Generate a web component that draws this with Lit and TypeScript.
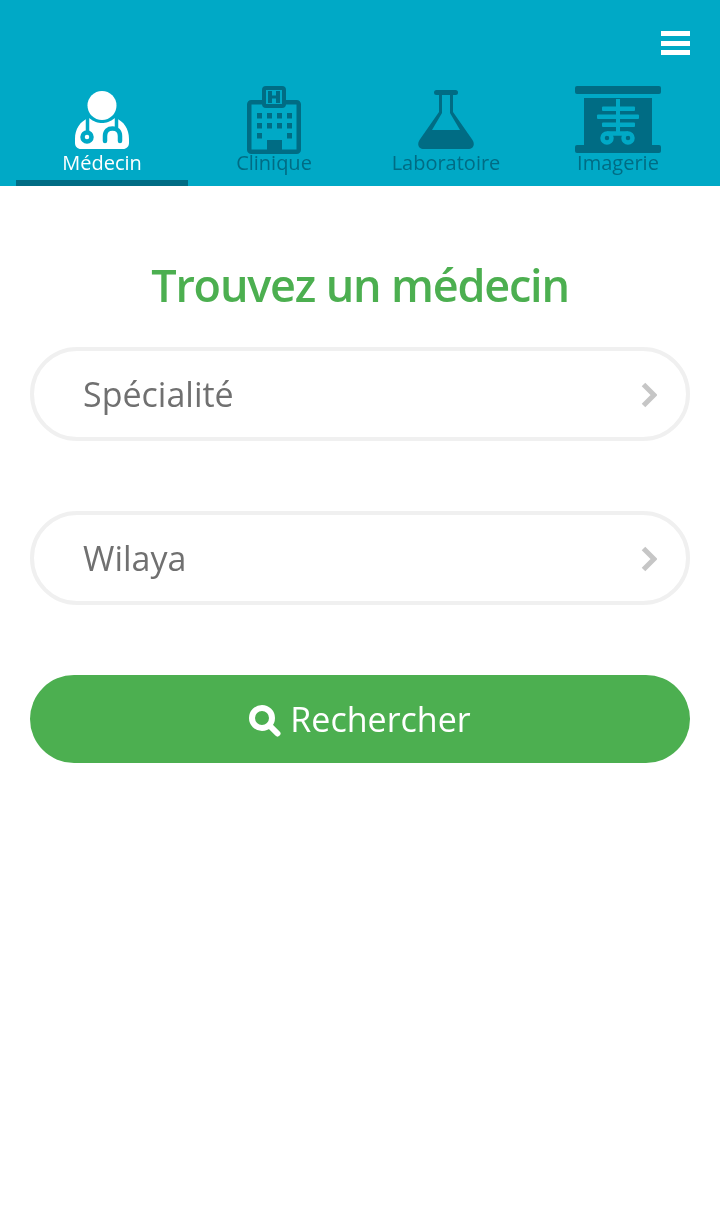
import { LitElement, css, html, svg } from 'lit';
import { customElement, state } from 'lit/decorators.js';

const doctorIcon = svg`
  <svg class="icon doctor" viewBox="0 0 54 58">
    <circle cx="27" cy="14.500" r="14.500" fill="currentColor"></circle>
    <path fill="currentColor" d="M14 27 C5 30 0 38 0 48 V52 C0 55.500 2.500 58 6 58 H48 C51.500 58 54 55.500 54 52 V48 C54 38 49 30 40 27 C35 31 31 32 27 32 C23 32 19 31 14 27 Z"></path>
    <g fill="none" stroke="#00a9c6" stroke-linecap="round">
      <path d="M12.500 26 V41" stroke-width="3.500"></path>
      <circle cx="12" cy="46" r="4.500" stroke-width="4.500"></circle>
      <path d="M41.500 26 V37" stroke-width="3.500"></path>
      <path d="M30 50 V45 C30 40 33 37.500 37.500 37.500 C42 37.500 45 40 45 45 V50" stroke-width="4.500"></path>
    </g>
  </svg>
`;

const clinicIcon = svg`
  <svg class="icon clinic" viewBox="0 0 54 68">
    <rect x="2.250" y="16.250" width="49.500" height="49.500" rx="2" fill="none" stroke="currentColor" stroke-width="4.500"></rect>
    <rect x="17" y="2" width="20" height="18" rx="2" fill="#00a9c6" stroke="currentColor" stroke-width="4"></rect>
    <path fill="currentColor" d="M21 5 H25 V9.500 H29 V5 H33 V17 H29 V12.500 H25 V17 H21 Z"></path>
    <g fill="currentColor">
      <rect x="10" y="27" width="5" height="5.500"></rect><rect x="20" y="27" width="5" height="5.500"></rect>
      <rect x="30" y="27" width="5" height="5.500"></rect><rect x="40" y="27" width="5" height="5.500"></rect>
      <rect x="10" y="37" width="5" height="5.500"></rect><rect x="20" y="37" width="5" height="5.500"></rect>
      <rect x="30" y="37" width="5" height="5.500"></rect><rect x="40" y="37" width="5" height="5.500"></rect>
      <rect x="10" y="47" width="5" height="5.500"></rect><rect x="40" y="47" width="5" height="5.500"></rect>
      <rect x="20" y="54" width="15" height="13"></rect>
    </g>
  </svg>
`;

const flaskIcon = svg`
  <svg class="icon flask" viewBox="0 0 56 59">
    <rect x="16" y="0" width="24" height="5" rx="2.500" fill="currentColor"></rect>
    <path fill="currentColor" fill-rule="evenodd" d="M21 4 V22 L1.500 50 C-1.500 54.500 1 59 6 59 H50 C55 59 57.500 54.500 54.500 50 L35 22 V4 Z M24 5 H32 V23 L42 40 H14 L24 23 Z"></path>
  </svg>
`;

const xrayIcon = svg`
  <svg class="icon xray" viewBox="0 0 86 67">
    <rect x="0" y="0" width="86" height="8" rx="2" fill="currentColor"></rect>
    <rect x="9" y="12" width="68" height="48" fill="currentColor"></rect>
    <rect x="0" y="59" width="86" height="8" rx="2" fill="currentColor"></rect>
    <g fill="#00a9c6">
      <rect x="41" y="13" width="4" height="35"></rect>
      <rect x="27" y="20.500" width="33" height="4.500" rx="1"></rect>
      <rect x="22" y="28.500" width="42" height="4.500" rx="1"></rect>
      <rect x="27" y="36.500" width="33" height="4.500" rx="1"></rect>
    </g>
    <g fill="none" stroke="#00a9c6" stroke-width="4.500">
      <circle cx="32" cy="52" r="4.500"></circle>
      <circle cx="53" cy="52" r="4.500"></circle>
      <path d="M32 47.500 H53"></path>
    </g>
  </svg>
`;

const chevron = svg`
  <svg class="chevron" viewBox="0 0 16 26">
    <path d="M2.500 2.500 L13 13 L2.500 23.500" fill="none" stroke="#c6c6c6" stroke-width="5"></path>
  </svg>
`;

const searchIcon = svg`
  <svg class="search" viewBox="0 0 32 32">
    <circle cx="13" cy="13" r="10" fill="none" stroke="currentColor" stroke-width="6"></circle>
    <path d="M21 21 L28.500 28.500" fill="none" stroke="currentColor" stroke-width="6" stroke-linecap="round"></path>
  </svg>
`;

const tabs = [
  { label: 'Médecin', icon: doctorIcon, title: 'Trouvez un médecin' },
  { label: 'Clinique', icon: clinicIcon, title: 'Trouvez une clinique' },
  { label: 'Laboratoire', icon: flaskIcon, title: 'Trouvez un laboratoire' },
  { label: 'Imagerie', icon: xrayIcon, title: 'Trouvez une imagerie' },
];

@customElement('app-root')
export class AppRoot extends LitElement {
  @state() private active = 0;

  static styles = css`
    :host {
      display: block;
      min-height: 1230px;
      background: #fff;
      font-family: 'Open Sans', sans-serif;
    }

    .header {
      height: 186px;
      box-sizing: border-box;
      background: #00a9c6;
      padding: 31px 16px 0;
      display: flex;
      flex-direction: column;
      justify-content: space-between;
    }

    .menu {
      align-self: flex-end;
      margin-right: 14px;
      width: 29px;
      display: flex;
      flex-direction: column;
      gap: 4.500px;
    }

    .menu span {
      height: 5px;
      background: #fff;
    }

    .tabs {
      display: grid;
      grid-template-columns: repeat(4, 172px);
      will-change: opacity;
    }

    .tab {
      height: 100px;
      box-sizing: border-box;
      padding-bottom: 6px;
      display: flex;
      flex-direction: column;
      align-items: center;
      justify-content: flex-end;
      color: #006c84;
      cursor: pointer;
    }

    .tab.active {
      color: #fff;
      border-bottom: 6px solid #006c84;
      padding-bottom: 0;
    }

    .icon {
      display: block;
    }

    .doctor {
      width: 54px;
      height: 58px;
      margin-bottom: 4px;
    }

    .clinic {
      width: 54px;
      height: 68px;
      margin-bottom: -1px;
    }

    .flask {
      width: 56px;
      height: 59px;
      margin-bottom: 4px;
    }

    .xray {
      width: 86px;
      height: 67px;
    }

    .label {
      font-size: 20px;
      line-height: 20px;
      margin-bottom: 7px;
    }

    .form {
      padding: 67px 30px 0;
      display: flex;
      flex-direction: column;
      will-change: opacity;
    }

    h1 {
      margin: 0 0 30px;
      text-align: center;
      color: #4caf50;
      font-size: 45px;
      line-height: 64px;
      font-weight: 600;
      letter-spacing: -1.200px;
    }

    .select {
      height: 94px;
      box-sizing: border-box;
      border: 4px solid #f0f0f0;
      border-radius: 47px;
      padding: 0 29px 0 49px;
      margin-bottom: 70px;
      display: flex;
      align-items: center;
      justify-content: space-between;
      color: #707070;
      font-size: 34px;
      line-height: 46px;
    }

    .chevron {
      width: 16px;
      height: 26px;
      margin-top: 2px;
    }

    button {
      height: 88px;
      border: 0;
      border-radius: 44px;
      background: #4caf50;
      color: #fff;
      font: inherit;
      font-size: 34px;
      display: flex;
      align-items: center;
      justify-content: center;
      gap: 9px;
    }

    .search {
      width: 32px;
      height: 32px;
      margin-top: 3px;
    }
  `;

  render() {
    return html`
      <div class="header">
        <div class="menu"><span></span><span></span><span></span></div>
        <div class="tabs">
          ${tabs.map(
            (tab, i) => html`
              <div class="tab ${i === this.active ? 'active' : ''}" @click="${() => (this.active = i)}">
                ${tab.icon}
                <div class="label">${tab.label}</div>
              </div>
            `
          )}
        </div>
      </div>
      <div class="form">
        <h1>${tabs[this.active].title}</h1>
        <div class="select"><span>Spécialité</span>${chevron}</div>
        <div class="select"><span>Wilaya</span>${chevron}</div>
        <button>${searchIcon}<span>Rechercher</span></button>
      </div>
    `;
  }
}
